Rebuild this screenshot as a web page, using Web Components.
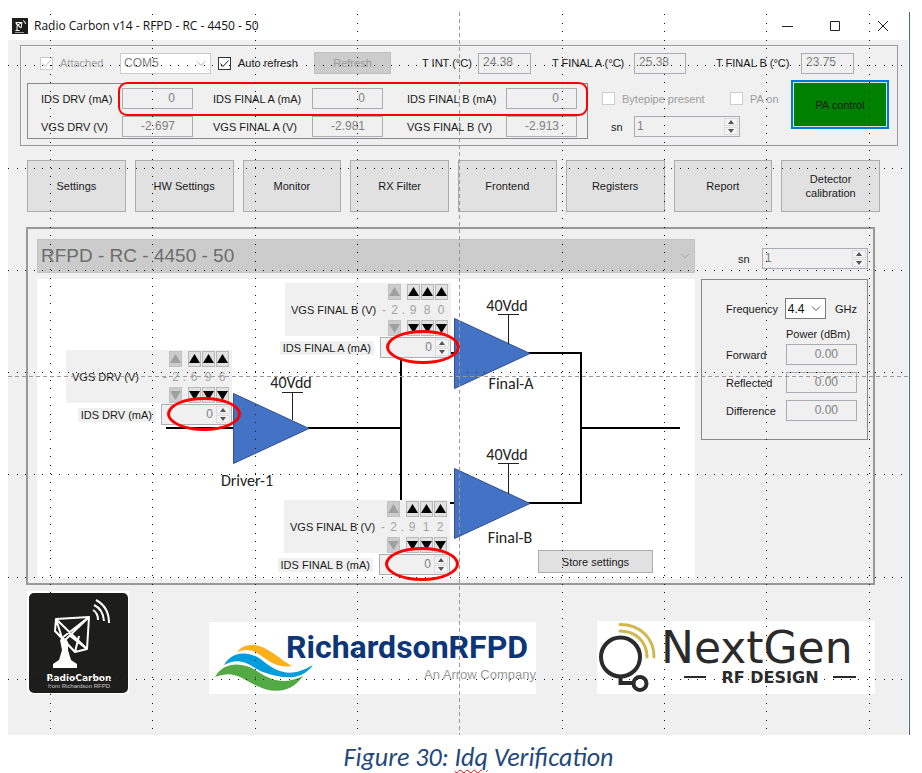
<!DOCTYPE html>
<html lang="en">
<head>
<meta charset="utf-8">
<title>Radio Carbon v14</title>
<style>
  body { margin: 0; background: #fff; font: 11px/14px "Liberation Sans", Arial, sans-serif; color: #1a1a1a; }
</style>
</head>
<body>
<rc-figure></rc-figure>

<script>
const BASE = `
  * { box-sizing: border-box; }
  input, select, button { font: inherit; margin: 0; border-radius: 0; min-width: 0; }
  label, span { white-space: nowrap; }
`;
const define = (tag, render) => customElements.define(tag, class extends HTMLElement {
  constructor() {
    super();
    this.attachShadow({ mode: 'open' });
  }
  connectedCallback() {
    const t = document.createElement('template');
    t.innerHTML = `<style>${BASE}</style>` + render(this);
    this.shadowRoot.replaceChildren(t.content.cloneNode(true));
  }
});
const at = (el, name, fallback = '') => el.getAttribute(name) ?? fallback;

/* Label and read-only value; both take part in the grid of the parent. */
define('rc-reading', el => `
  <style>
    :host { display: contents; }
    label { align-self: center; padding-left: var(--lead, 0px); }
    input { width: 100%; height: 21px; border: 1px solid #abadb3; background: #f0f0f0; color: #808080; font-size: 12px;
      padding: 0 var(--tail, 17px) 2px 4px; text-align: var(--align, right); }
  </style>
  <label for="v">${at(el, 'label')}</label><input id="v" readonly value="${at(el, 'value')}">`);

define('rc-check', el => `
  <style>
    :host { display: flex; align-items: center; }
    label { display: flex; align-items: center; gap: 7px; color: ${el.hasAttribute('off') ? '#9d9d9d' : '#1a1a1a'}; }
    .box { position: relative; display: grid; width: 13px; height: 13px; }
    input { appearance: none; width: 13px; height: 13px; background: #fff; border: 1px solid ${el.hasAttribute('off') ? '#ccc' : '#333'}; }
    svg { position: absolute; inset: 0; display: none; fill: none; stroke: ${el.hasAttribute('off') ? '#bbb' : '#222'}; }
    input:checked + svg { display: block; }
  </style>
  <label><span class="box"><input type="checkbox" ${el.hasAttribute('on') ? 'checked' : ''} ${el.hasAttribute('off') ? 'disabled' : ''}>
    <svg width="13" height="13" viewBox="0 0 13 13"><path d="M2.5 6.5 5 9.5 10.5 3.5"/></svg></span><slot></slot></label>`);

define('rc-select', el => `
  <style>
    :host { display: block; position: relative; height: var(--h, 21px); }
    select { appearance: none; width: 100%; height: 100%; padding: 0 var(--p, 3px); background: var(--bg, #fff); border: 1px solid var(--bd, #ccc);
      color: var(--fg, #808080); font-size: var(--fs, 12px); opacity: 1; }
    svg { position: absolute; right: 5px; top: 0; height: 100%; fill: none; stroke: var(--arrow, #aaa); pointer-events: none; }
  </style>
  <select id="s" aria-label="${at(el, 'name')}" ${el.hasAttribute('off') ? 'disabled' : ''}><option>${at(el, 'value')}</option></select>
  <svg width="10" height="10" viewBox="0 0 10 10"><path d="M1 3 5 7 9 3"/></svg>`);

define('rc-button', el => `
  <style>
    :host { display: block; }
    button { width: 100%; height: 100%; padding: 0 8px; line-height: 14px; background: var(--bg, #e1e1e1); border: var(--bd, 1px solid #adadad); color: var(--fg, #1a1a1a); box-shadow: var(--ring, none); }
  </style>
  <button type="button" ${el.hasAttribute('off') ? 'disabled' : ''}><slot></slot></button>`);

define('rc-spin', el => `
  <style>
    :host { display: block; position: relative; height: 21px; }
    input { appearance: textfield; width: 100%; height: 21px; padding: 0 18px 2px 2px; border: 1px solid #abadb3; background: #f0f0f0; color: #808080; font-size: 12px; text-align: var(--align, left); opacity: 1; }
    input::-webkit-inner-spin-button { appearance: none; }
    .steps { position: absolute; right: 2px; top: 2px; bottom: 2px; width: 14px; display: grid; gap: 1px; }
    button { padding: 0; border: 1px solid #dcdcdc; background: #f3f3f3; display: grid; place-items: center; }
    svg { display: block; fill: #555; }
  </style>
  <input type="number" aria-label="${at(el, 'name')}" value="${at(el, 'value')}" disabled>
  <div class="steps">
    <button type="button" disabled aria-label="Increase"><svg width="6" height="4"><path d="M0 4 3 0 6 4Z"/></svg></button>
    <button type="button" disabled aria-label="Decrease"><svg width="6" height="4"><path d="M0 0 3 4 6 0Z"/></svg></button>
  </div>`);

define('rc-titlebar', () => `
  <style>
    :host { display: flex; align-items: center; height: 28px; padding-left: 4px; background: #fff; color: #111; font: 12px/16px "Open Sans", "Noto Sans", sans-serif; }
    .name { flex: 1; padding-left: 6px; }
    button { width: 48px; height: 28px; padding: 0; border: 0; background: none; display: grid; place-items: center; }
    button svg { fill: none; stroke: #222; }
  </style>
  <svg width="16" height="16" viewBox="0 0 16 16"><path fill="#1d1d1b" d="M0 0h16v16H0z"/><path d="M4 4.500h6L9 10 4.500 6.500Zm0 0 5 5.500M10 4.500 5 7.500V12M3.500 12.500h4M11 2.500q2.500 1 2.500 3.500" fill="none" stroke="#fff"/><path d="M3 14.500h9" stroke="#999"/></svg>
  <span class="name">Radio Carbon v14 - RFPD - RC - 4450 - 50</span>
  <button type="button" aria-label="Minimize"><svg width="12" height="12"><path d="M1 6.500h11"/></svg></button>
  <button type="button" aria-label="Maximize"><svg width="12" height="12"><path d="M1.500 1.500h9v9h-9z"/></svg></button>
  <button type="button" aria-label="Close"><svg width="12" height="12"><path d="M1 1 11 11M11 1 1 11"/></svg></button>`);

define('rc-status', () => `
  <style>
    :host { display: block; border: 1px solid #999; box-shadow: inset 1px 1px #f8f8f8; padding: 6px 0; }
    .top { display: grid; grid-template-columns: 80fr 91fr 103fr 77fr 87fr 53fr 103fr 52fr 115fr 53fr; padding: 0 43px 0 19px; align-items: center; --align: left; --tail: 2px; }
    .auto { padding-left: 7px; }
    .off { height: 22px; --bg: #ccc; --bd: 1px solid #bfbfbf; --fg: #9a9a9a; }
    .low { display: grid; grid-template-columns: 561fr 203fr 98fr; padding: 0 8px 0 6px; margin-top: 6px; }
    .group { position: relative; margin-top: 3px; border: 1px solid #8a8a8a; padding: 4px 10px 0 13px; height: 56px;
      display: grid; grid-template-columns: 81fr 71fr 119fr 71fr 123fr 71fr; row-gap: 7px; align-content: start; }
    .b { --lead: 20px; } .c { --lead: 24px; }
    .mark { position: absolute; left: 90px; right: -1px; top: -2px; height: 34px; border: 2px solid #f00; border-radius: 9px; pointer-events: none; }
    .side { padding: 8px 0 0 14px; display: grid; grid-template-columns: 128fr 61fr; grid-auto-rows: 21px; row-gap: 7px; }
    .sn { grid-column: 1 / -1; display: grid; grid-template-columns: 23fr 106fr 51fr; padding-left: 9px; align-items: center; }
    .pa { height: 49px; --bg: #008000; --bd: 2px solid #0078d7; --ring: inset 0 0 0 1px #cfe6cf; }
  </style>
  <div class="top">
    <rc-check on off>Attached</rc-check>
    <rc-select name="Port" value="COM5" off></rc-select>
    <rc-check class="auto" on>Auto refresh</rc-check>
    <rc-button class="off" off>Refresh</rc-button>
    <rc-reading style="--lead:31px" label="T INT (°C)" value="24.38"></rc-reading>
    <rc-reading style="--lead:21px" label="T FINAL A (°C)" value="25.38"></rc-reading>
    <rc-reading style="--lead:30px" label="T FINAL B (°C)" value="23.75"></rc-reading>
  </div>
  <div class="low">
    <div class="group">
      <rc-reading label="IDS DRV (mA)" value="0"></rc-reading>
      <rc-reading class="b" label="IDS FINAL A (mA)" value="0"></rc-reading>
      <rc-reading class="c" label="IDS FINAL B (mA)" value="0"></rc-reading>
      <rc-reading label="VGS DRV (V)" value="-2.697"></rc-reading>
      <rc-reading class="b" label="VGS FINAL A (V)" value="-2.981"></rc-reading>
      <rc-reading class="c" label="VGS FINAL B (V)" value="-2.913"></rc-reading>
      <div class="mark"></div>
    </div>
    <div class="side">
      <rc-check off>Bytepipe present</rc-check>
      <rc-check off>PA on</rc-check>
      <div class="sn"><span>sn</span><rc-spin name="sn" value="1"></rc-spin></div>
    </div>
    <rc-button class="pa">PA control</rc-button>
  </div>`);

define('rc-nav', () => `
  <style>
    :host { display: grid; grid-template-columns: repeat(8, 1fr); gap: 9px; }
    rc-button { height: 52px; }
  </style>
  ${['Settings', 'HW Settings', 'Monitor', 'RX Filter', 'Frontend', 'Registers', 'Report', 'Detector calibration'].map(n => `<rc-button>${n}</rc-button>`).join('')}`);

/* Gate voltage digits with step buttons above the drain current box. */
define('rc-bias', el => {
  const digits = at(el, 'digits').split('');
  const step = (dir, i) => `<button type="button" ${i ? '' : 'disabled'} aria-label="${dir} digit ${i + 1}"><svg width="11" height="10"><path d="${dir === 'Raise' ? 'M0 9 5.500 0 11 9Z' : 'M0 1 5.500 10 11 1Z'}"/></svg></button>`;
  const row = dir => `<i></i>${step(dir, 0)}<i></i>${[1, 2, 3].map(i => step(dir, i)).join('')}`;
  return `
  <style>
    :host { display: flex; flex-direction: column; align-items: flex-end; width: 176px; }
    .vgs { width: 166px; height: 53px; background: #f0f0f0; display: flex; align-items: center; justify-content: flex-end; padding-right: 3px; }
    .vgs > span { flex: 1; padding-left: 6px; }
    .digits { display: grid; grid-template-columns: 8px 13px 5px 14px 14px 14px; grid-template-rows: 17px 19px 17px; justify-items: center; align-items: center; color: #a3a3a3; font-size: 12px; }
    button { width: 13px; height: 16px; padding: 0; border: 1px solid #b8b8b8; background: #e1e1e1; display: grid; place-items: center; overflow: hidden; }
    button:disabled { background: #ccc; border-color: #c2c2c2; }
    svg { display: block; fill: #000; } button:disabled svg { fill: #a0a0a0; }
    .ids { display: flex; align-items: center; gap: 6px; margin-top: 1px; }
    .ids > span { background: #f0f0f0; padding: 0 3px; }
    .box { position: relative; width: 71px; --align: right; }
    .ring { position: absolute; left: 6px; top: -7px; width: 74px; height: 34px; border: 3px solid #f00; border-radius: 50%; pointer-events: none; }
  </style>
  <div class="vgs"><span>${at(el, 'vgs')}</span>
    <div class="digits">${row('Raise')}<span>-</span><span>${digits[0]}</span><span>.</span>${digits.slice(1).map(d => `<span>${d}</span>`).join('')}${row('Lower')}</div></div>
  <div class="ids"><span>${at(el, 'ids')}</span><div class="box"><rc-spin name="${at(el, 'ids')}" value="0"></rc-spin><div class="ring"></div></div></div>`;
});

define('rc-diagram', () => `
  <style>
    :host { display: block; position: relative; height: 300px; background: #fff; }
    svg { display: block; overflow: visible; font: 16px/16px Carlito, Lato, sans-serif; }
    rc-bias, .store { position: absolute; }
    .drv { left: 19px; top: 71px; } .a { left: 238px; top: 4px; } .b { left: 237px; top: 221px; }
    .store { left: 501px; top: 271px; width: 115px; height: 23px; }
  </style>
  <svg width="658" height="300" viewBox="37 279 658 300">
    <g fill="none" stroke="#000" stroke-width="2"><path d="M166 428H233M308 428H401M455 353H401V503H455M528 353H581V503H528M581 428H680"/></g>
    <g fill="#4472c4" stroke="#2f528f"><path d="M233.500 393.500V463.500L309 428.500ZM454.500 318.500V388.500L530 353.500ZM454.500 468.500V538.500L530 503.500Z"/></g>
    <g fill="none" stroke="#222"><path d="M282 392.500H303M292.500 392V420M498 314.500H519M508.500 314V344M498 463.500H519M508.500 463V494"/></g>
    <g fill="#222" text-anchor="middle">
      <text x="291" y="388">40Vdd</text><text x="507" y="311">40Vdd</text><text x="507" y="460">40Vdd</text>
      <text x="247" y="486">Driver-1</text><text x="511" y="389">Final-A</text><text x="510" y="543">Final-B</text>
    </g>
  </svg>
  <rc-bias class="drv" vgs="VGS DRV (V)" ids="IDS DRV (mA)" digits="2696"></rc-bias>
  <rc-bias class="a" vgs="VGS FINAL B (V)" ids="IDS FINAL A (mA)" digits="2980"></rc-bias>
  <rc-bias class="b" vgs="VGS FINAL B (V)" ids="IDS FINAL B (mA)" digits="2912"></rc-bias>
  <rc-button class="store">Store settings</rc-button>`);

define('rc-power', () => `
  <style>
    :host { display: grid; grid-template-columns: 60fr 71fr; row-gap: 7px; border: 1px solid #888; padding: 18px 10px 18px 24px; --tail: 18px; }
    .freq { grid-column: 1 / -1; display: grid; grid-template-columns: 60fr 42fr 29fr; align-items: center; }
    .freq rc-select { --bd: #7a7a7a; --fg: #111; --arrow: #555; --p: 2px; }
    .freq .unit { padding-left: 9px; }
    .head { grid-column: 2; line-height: 14px; margin-bottom: -4px; margin-top: 1px; }
  </style>
  <div class="freq"><span>Frequency</span><rc-select name="Frequency" value="4.4"></rc-select><span class="unit">GHz</span></div>
  <span class="head">Power (dBm)</span>
  <rc-reading label="Forward" value="0.00"></rc-reading>
  <rc-reading label="Reflected" value="0.00"></rc-reading>
  <rc-reading label="Difference" value="0.00"></rc-reading>`);

define('rc-main', () => `
  <style>
    :host { display: grid; grid-template-columns: 658fr 167fr; column-gap: 6px; border: 2px solid #999; padding: 10px 5px 4px 9px; align-items: start; }
    .left { display: grid; gap: 6px; }
    .model { --h: 34px; --bg: #ccc; --bd: #c4c4c4; --fg: #6d6d6d; --fs: 19px; }
    .right { padding-top: 9px; display: grid; row-gap: 10px; }
    .sn { display: grid; grid-template-columns: 24fr 106fr; padding-left: 37px; align-items: center; }
  </style>
  <div class="left">
    <rc-select class="model" name="Model" value="RFPD - RC - 4450 - 50" off></rc-select>
    <rc-diagram></rc-diagram>
  </div>
  <div class="right">
    <div class="sn"><span>sn</span><rc-spin name="sn" value="1"></rc-spin></div>
    <rc-power></rc-power>
  </div>`);

define('rc-logos', () => `
  <style>
    :host { display: grid; grid-template-columns: auto 81fr auto 61fr auto; align-items: end; }
    svg { display: block; background: #fff; }
    svg:nth-of-type(2) { grid-column: 3; }
    svg:nth-of-type(3) { grid-column: 5; }
  </style>
  <svg width="102" height="103" viewBox="26 591 102 103" role="img" aria-label="RadioCarbon">
    <rect x="28" y="593" width="99" height="100" rx="5" fill="#1d1d1b"/>
    <g fill="none" stroke="#fff" stroke-width="2" stroke-linejoin="round"><path d="M55 619 88 617 86 649 74 652 54 631ZM55 619 86 649M88 617 62 642M55 619 61 638 88 617M54 631 61 638 74 652 78 636M68 635 86 649"/>
      <path d="M92 610Q97 613 97 620M93 605Q102 609 103 621M95 600Q108 607 108 623"/></g>
    <path fill="#fff" d="M59 640Q63 635 67 642V650L70 660 76 664V668H52V664L58 660 61 650Z"/>
    <text x="78" y="681" text-anchor="middle" fill="#fff" font-family="DejaVu Sans" font-weight="bold" font-size="9">RadioCarbon</text>
    <text x="78" y="688" text-anchor="middle" fill="#ccc" font-family="Liberation Sans" font-size="6">from Richardson RFPD</text>
  </svg>
  <svg width="327" height="72" viewBox="209 621 327 72" role="img" aria-label="Richardson RFPD">
    <path fill="#fbb01c" d="M237 651C243 643 255 641 268 649S286 662 292 665C278 667 270 661 260 654S244 649 237 651Z"/>
    <path fill="#009ddc" d="M224 664C231 651 248 648 263 660S291 677 313 664C301 681 282 677 266 672S244 654 224 664Z"/>
    <path fill="#53a944" d="M215 676C223 661 242 660 257 670S284 684 303 675C290 694 270 692 255 684S233 669 215 676Z"/>
    <text x="286" y="657" fill="#0c3678" font-family="Roboto" font-weight="bold" font-size="32">RichardsonRFPD</text>
    <text x="424" y="678" fill="#999" font-family="Liberation Sans" font-size="13">An Arrow Company</text>
  </svg>
  <svg width="278" height="73" viewBox="597 621 278 73" role="img" aria-label="NextGen RF Design">
    <g fill="none" stroke="#2b2b2b" stroke-width="4"><circle cx="620.500" cy="657" r="19.500"/><path d="M620.500 677V683H633"/><circle cx="640" cy="683.500" r="6.500"/></g>
    <g fill="none" stroke="#d1b74c" stroke-width="3" stroke-linecap="round"><path d="M620 631C636 631 647 642 647 657M620 624.500C641 624.500 654 639 654 657"/></g>
    <text x="661" y="663" fill="#2b2b2b" font-family="DejaVu Sans" font-size="44">NextGen</text>
    <path d="M684 677H706M833 677H856" stroke="#2b2b2b" stroke-width="2"/>
    <text x="770" y="683" text-anchor="middle" fill="#2b2b2b" font-family="DejaVu Sans" font-weight="bold" font-size="16">RF DESIGN</text>
  </svg>`);

/* Alignment guides laid over the whole window. */
define('rc-guides', () => `
  <style>
    :host { position: absolute; inset: 0; pointer-events: none; }
    svg { display: block; shape-rendering: crispEdges; }
  </style>
  <svg width="100%" height="100%" fill="none" stroke="#111">
    <path stroke-dasharray="1 8 1 7" d="${[42, 144, 247, 349, 554, 656, 758, 861].map(x => `M${x}.500 2V723`).join('')}"/>
    <path stroke-dasharray="1 8 1 7" d="${[53, 156, 258, 360, 462, 565, 667].map(y => `M0 ${y}.500H902`).join('')}"/>
    <g stroke="#999" stroke-dasharray="4 3"><path d="M451.500 0V723"/><line x1="0" x2="100%" y1="364.500" y2="364.500"/></g>
  </svg>`);

define('rc-window', () => `
  <style>
    :host { display: block; position: relative; margin: 12px 12px 0 8px; padding-right: 2px; border-right: 1px solid #4a6585; }
    .client { background: #f0f0f0; padding: 5px 10px 41px 12px; margin-right: -1px; }
    rc-nav { margin: 14px 18px 0 7px; }
    rc-main { margin: 15px 23px 0 6px; }
    rc-logos { margin: 6px 23px 0 7px; }
  </style>
  <rc-titlebar></rc-titlebar>
  <div class="client">
    <rc-status></rc-status>
    <rc-nav></rc-nav>
    <rc-main></rc-main>
    <rc-logos></rc-logos>
  </div>
  <rc-guides></rc-guides>`);

define('rc-figure', () => `
  <style>
    :host { display: block; }
    p { margin: 6px 0 0 35px; text-align: center; color: #1f497d; font: italic 26px/32px Carlito, Lato, sans-serif; }
    u { text-decoration: underline wavy #e00 1px; text-underline-offset: 3px; }
  </style>
  <rc-window></rc-window>
  <p>Figure 30: <u>Idq</u> Verification</p>`);
</script>
</body>
</html>
